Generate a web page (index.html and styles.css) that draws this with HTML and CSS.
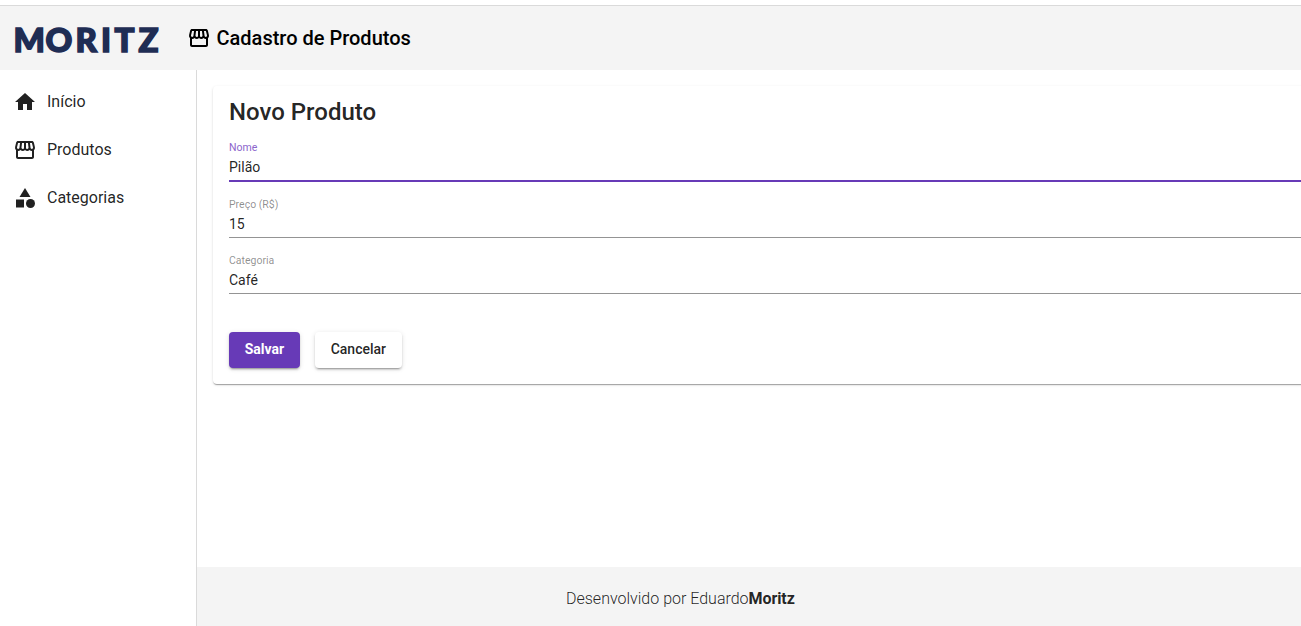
FILE: index.html
```html
<!DOCTYPE html>
<html lang="pt-BR">
<head>
<meta charset="utf-8">
<title>Cadastro de Produtos</title>
<link rel="stylesheet" href="styles.css">
</head>
<body>
<svg class="defs" width="0" height="0" aria-hidden="true">
  <symbol id="store" viewBox="0 0 24 24"><path d="M21.9 8.89l-1.05-4.37c-.22-.9-1-1.52-1.91-1.52H5.05c-.9 0-1.69.63-1.9 1.52L2.1 8.89c-.24 1.02-.02 2.06.62 2.88.08.11.19.19.28.29V19c0 1.1.9 2 2 2h14c1.1 0 2-.9 2-2v-6.94c.09-.09.2-.18.28-.28.64-.82.87-1.87.62-2.89zm-2.99-3.9l1.05 4.37c.1.42.01.84-.25 1.17-.14.18-.44.47-.94.47-.61 0-1.14-.49-1.21-1.14L16.98 5l1.93-.01zM13 5h1.96l.54 4.52c.05.39-.07.78-.33 1.07-.22.26-.54.41-.95.41-.67 0-1.22-.59-1.22-1.31V5zM8.49 9.52L9.04 5H11v4.69c0 .72-.55 1.31-1.29 1.31-.34 0-.65-.15-.89-.41-.25-.29-.37-.68-.33-1.07zm-4.45-.16L5.05 5h1.97l-.58 4.86c-.08.65-.6 1.14-1.21 1.14-.49 0-.8-.29-.93-.47-.27-.32-.36-.75-.26-1.17zM5 19v-6.03c.08.01.15.03.23.03.87 0 1.66-.36 2.24-.95.6.6 1.4.95 2.31.95.87 0 1.65-.36 2.23-.93.59.57 1.39.93 2.29.93.84 0 1.64-.35 2.24-.95.58.59 1.37.95 2.24.95.08 0 .15-.02.23-.03V19H5z"/></symbol>
</svg>
<header class="header">
  <svg class="logo" width="150" height="32" viewBox="0 0 150 32">
    <text y="27" x="-1.5 30.5 60.5 86 99.5 123.5">MORITZ</text>
  </svg>
  <h1 class="title"><svg class="icon"><use href="#store"/></svg><span>Cadastro de Produtos</span></h1>
</header>
<div class="layout">
  <nav class="nav">
    <a class="nav-item"><svg class="icon" viewBox="0 0 24 24"><path d="M10 20v-6h4v6h5v-8h3L12 3 2 12h3v8z"/></svg><span>Início</span></a>
    <a class="nav-item"><svg class="icon"><use href="#store"/></svg><span>Produtos</span></a>
    <a class="nav-item"><svg class="icon" viewBox="0 0 24 24"><path d="M12 2l-5.5 9h11z"/><circle cx="17.5" cy="17.5" r="4.5"/><path d="M3 13.5h8v8H3z"/></svg><span>Categorias</span></a>
  </nav>
  <div class="content">
    <main class="main">
      <section class="card">
        <h2 class="card-title">Novo Produto</h2>
        <div class="field focused"><label>Nome</label><div class="value">Pilão</div></div>
        <div class="field"><label>Preço (R$)</label><div class="value">15</div></div>
        <div class="field"><label>Categoria</label><div class="value">Café</div></div>
        <div class="actions">
          <button class="button primary">Salvar</button>
          <button class="button">Cancelar</button>
        </div>
      </section>
    </main>
    <footer class="footer"><span>Desenvolvido por Eduardo<strong>Moritz</strong></span></footer>
  </div>
</div>
</body>
</html>
```
FILE: styles.css
```css
* { box-sizing: border-box; }
body {
  margin: 0;
  height: 626px;
  padding-top: 5px;
  overflow: hidden;
  display: flex;
  flex-direction: column;
  background: #fff;
  color: rgba(0, 0, 0, .87);
  font-family: Roboto, sans-serif;
}
.defs { display: none; }
.icon { width: 24px; height: 24px; flex: none; fill: currentColor; }
.header {
  display: flex;
  flex: none;
  height: 65px;
  padding-left: 15px;
  border-top: 1px solid #dadada;
  background: #f4f4f4;
}
.logo { margin-top: 19px; overflow: visible; }
.logo text {
  font: 900 33px Lato, sans-serif;
  fill: #1f2d54;
  stroke: #1f2d54;
  stroke-width: 1.6px;
}
.title {
  display: flex;
  align-items: center;
  gap: 5.5px;
  height: 64px;
  margin: 0 0 0 22px;
  color: #000;
  font-size: 20px;
  font-weight: 500;
}
.layout { display: flex; flex: 1; min-height: 0; }
.nav {
  width: 197px;
  flex: none;
  padding-top: 8px;
  border-right: 1px solid #dadada;
}
.nav-item {
  display: flex;
  align-items: center;
  gap: 10px;
  height: 48px;
  padding-left: 13px;
  font-size: 16px;
  font-weight: 400;
}
.nav-item span { padding-bottom: 2px; }
.content { display: flex; flex: 1; flex-direction: column; min-width: 0; }
.main { flex: 1; padding: 16px 0 0 16px; }
.card {
  width: 1120px;
  height: 298px;
  padding: 10px 16px 16px;
  border-radius: 4px;
  box-shadow: 0 2px 1px -1px rgba(0, 0, 0, .2), 0 1px 1px rgba(0, 0, 0, .14), 0 1px 3px rgba(0, 0, 0, .12);
}
.card-title { margin: 0; font-size: 24px; font-weight: 500; line-height: 32px; }
.field { height: 56px; padding-top: 15px; border-bottom: 1px solid #949494; }
.field label {
  display: block;
  color: rgba(0, 0, 0, .45);
  font-size: 10.5px;
  line-height: 16px;
}
.value { font-size: 14px; line-height: 16px; padding-top: 3px; }
.focused { height: 54px; padding-top: 12px; border-bottom: 2px solid #673ab7; }
.focused label { color: #8b65cc; }
.actions { display: flex; gap: 15px; margin-top: 38px; }
.button {
  height: 36px;
  padding: 0 15.75px 2px;
  border: 0;
  border-radius: 4px;
  background: #fff;
  color: rgba(0, 0, 0, .87);
  font: 500 14px/34px Roboto, sans-serif;
  box-shadow: 0 3px 1px -2px rgba(0, 0, 0, .2), 0 2px 2px rgba(0, 0, 0, .14), 0 1px 5px rgba(0, 0, 0, .12);
}
.primary { background: #673ab7; color: #fff; font-weight: 700; }
.footer {
  display: flex;
  align-items: center;
  height: 59px;
  padding: 4px 0 0 369px;
  background: #f4f4f4;
  font-size: 16px;
  font-weight: 300;
}
.footer strong { font-weight: 700; letter-spacing: -.1px; }
```
